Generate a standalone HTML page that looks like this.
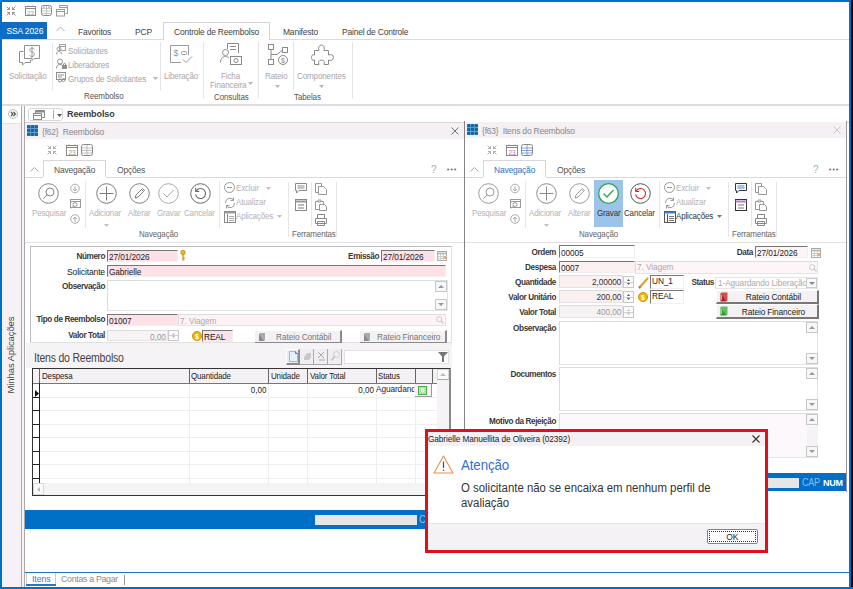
<!DOCTYPE html>
<html><head><meta charset="utf-8">
<style>
*{margin:0;padding:0;box-sizing:border-box}
html,body{width:853px;height:589px;overflow:hidden;background:#fff}
body{position:relative;font-family:"Liberation Sans",sans-serif;font-size:8px;color:#333}
.a{position:absolute}
.t{position:absolute;white-space:nowrap;line-height:12px;font-size:8px}
.g{color:#a8a4a8}
.d{color:#444}
.r{text-align:right}
.c{text-align:center}
.vs{position:absolute;width:1px;background:#e6e3e6}
.hl{position:absolute;height:1px;background:#d9d6d9}
svg{position:absolute;overflow:visible}
</style></head><body>
<!-- window frame -->
<div class="a" style="left:0;top:0;width:853px;height:2px;background:#0070c6"></div>
<div class="a" style="left:0;top:0;width:2px;height:589px;background:#0070c6"></div>
<div class="a" style="left:849px;top:0;width:2px;height:589px;background:#0070c6"></div>
<div class="a" style="left:851px;top:0;width:2px;height:589px;background:#000"></div>
<div class="a" style="left:0;top:587px;width:853px;height:2px;background:#0070c6"></div>

<!-- quick access -->
<svg style="left:6px;top:6px" width="10" height="10" stroke="#999" stroke-width="1" fill="none"><path d="M0.5 0.5L3.5 3.5M3.5 1V3.5H1M9.5 0.5L6.5 3.5M6.5 1V3.5H9M0.5 9.5L3.5 6.5M1 6.5H3.5V9M9.5 9.5L6.5 6.5M9 6.5H6.5V9"/></svg>
<svg style="left:25px;top:5px" width="11" height="11" stroke="#8a8a8a" stroke-width="1" fill="none"><rect x="0.5" y="1.5" width="10" height="9"/><path d="M0.5 3.5H10.5M3 0.5V2M8 0.5V2"/><text x="5.5" y="9.6" font-size="6" fill="#9a9a9a" stroke="none" text-anchor="middle" font-family="Liberation Sans">23</text></svg>
<svg style="left:41px;top:5px" width="11" height="11" fill="none"><rect x="0.5" y="0.5" width="10" height="10" rx="2" stroke="#8a8a8a"/><path d="M5.5 1V10M1 3.5H10M1 6H10M1 8.5H10" stroke="#b8b8b8" stroke-width="0.8"/><path d="M2 2.2H4M7 2.2H9" stroke="#888" stroke-width="0.8"/></svg>
<svg style="left:56px;top:5px" width="12" height="12" stroke="#999" stroke-width="1" fill="none"><rect x="0.5" y="4.5" width="8" height="6.5"/><path d="M0.5 6.5H8.5"/><path d="M3.5 2.5V0.5H11.5V8.5H9.5M3.5 2.5H11.5" /></svg>
<svg style="left:56px;top:26px" width="9" height="6" stroke="#b0b0b0" stroke-width="1" fill="none"><path d="M0.5 5L4.5 1L8.5 5"/></svg>
<!-- ribbon tabs -->
<div class="a" style="left:2px;top:22px;width:45px;height:17px;background:#0f6cc4"></div>
<div class="t" style="left:-1.37px;top:25px;width:51.75px;color:#fff;font-size:9.77px;letter-spacing:-0.115px;text-align:center;transform:scaleX(0.8696);transform-origin:50% 50%">SSA 2026</div>
<div class="hl" style="left:2px;top:39px;width:847px;background:#dcdadc"></div>
<div class="a" style="left:163px;top:22px;width:107px;height:18px;border:1px solid #d6d4d6;border-bottom:none;background:#fff"></div>
<div class="t d" style="left:174px;top:26px;font-size:9.77px;letter-spacing:-0.230px;transform:scaleX(0.8696);transform-origin:0 50%">Controle de Reembolso</div>
<div class="t d" style="left:78px;top:26px;font-size:9.77px;letter-spacing:-0.230px;transform:scaleX(0.8696);transform-origin:0 50%">Favoritos</div>
<div class="t d" style="left:135px;top:26px;font-size:9.77px;letter-spacing:-0.230px;transform:scaleX(0.8696);transform-origin:0 50%">PCP</div>
<div class="t d" style="left:283px;top:26px;font-size:9.77px;letter-spacing:-0.230px;transform:scaleX(0.8696);transform-origin:0 50%">Manifesto</div>
<div class="t d" style="left:342px;top:26px;font-size:9.77px;letter-spacing:-0.230px;transform:scaleX(0.8696);transform-origin:0 50%">Painel de Controle</div>

<!-- ribbon body -->
<!-- ribbon body content -->
<svg style="left:19px;top:45px" width="21" height="21" stroke="#8f8f8f" stroke-width="1" fill="none"><path d="M0.5 6.5H4.5M0.5 6.5V17.5H3.5V20L6 17.5H11.5V15"/><path d="M5.5 0.5H20.5V13.5H15L13 15.5V13.5H5.5Z"/><path d="M15.3 4.3C14.9 3.5 14 3 13 3C11.7 3 10.8 3.8 10.8 4.9C10.8 6.2 12 6.7 13 7C14.3 7.4 15.3 8 15.3 9.4C15.3 10.7 14.3 11.5 13 11.5C11.9 11.5 11 11 10.6 10.2M13 1.8V12.8" stroke-width="0.9"/></svg>
<div class="t g" style="left:9px;top:70px;letter-spacing:-0.115px;font-size:9.20px;transform:scaleX(0.8696);transform-origin:0 50%">Solicitação</div>
<div class="vs" style="left:52px;top:43px;height:47px"></div>
<svg style="left:56px;top:44px" width="10" height="11" stroke="#a0a0a0" stroke-width="1" fill="none"><rect x="3.5" y="0.5" width="6" height="6"/><path d="M3.5 2.5H9.5"/><circle cx="3" cy="5" r="2"/><path d="M0.5 10.5C0.5 8 2 7.5 3 7.5C4 7.5 5.5 8 5.5 10.5"/></svg>
<div class="t g" style="left:68px;top:45px;letter-spacing:-0.115px;font-size:9.20px;transform:scaleX(0.8696);transform-origin:0 50%">Solicitantes</div>
<svg style="left:56px;top:58px" width="11" height="11" stroke="#8f8f8f" stroke-width="1" fill="none"><circle cx="4" cy="3.5" r="2.5"/><path d="M0.5 10.5C0.5 7.5 2 6.5 4 6.5C5 6.5 6 7 6.5 7.5"/><rect x="6.5" y="7.5" width="4" height="3" fill="#8f8f8f"/><path d="M7.5 7.5V6C7.5 5 9.5 5 9.5 6V7.5"/></svg>
<div class="t g" style="left:68px;top:59px;letter-spacing:-0.115px;font-size:9.20px;transform:scaleX(0.8696);transform-origin:0 50%">Liberadores</div>
<svg style="left:56px;top:72px" width="11" height="11" stroke="#8f8f8f" stroke-width="1" fill="none"><rect x="0.5" y="0.5" width="9" height="7"/><path d="M2 3H8M2 5H6"/><circle cx="7.5" cy="8" r="1.5"/><circle cx="4" cy="8.5" r="1.5"/></svg>
<div class="t g" style="left:68px;top:73px;letter-spacing:-0.115px;font-size:9.20px;transform:scaleX(0.8696);transform-origin:0 50%">Grupos de Solicitantes</div>
<svg style="left:153px;top:77px" width="5" height="3" fill="#b5b5b5"><path d="M0 0H5L2.5 3Z"/></svg>
<div class="t d" style="left:84px;top:90px;letter-spacing:-0.115px;color:#555;font-size:9.20px;transform:scaleX(0.8696);transform-origin:0 50%">Reembolso</div>
<div class="vs" style="left:160px;top:42px;height:48px"></div>
<svg style="left:170px;top:45px" width="23" height="21" stroke="#9a9a9a" stroke-width="1" fill="none"><path d="M0.5 0.5H18.5V10M0.5 0.5V17.5H11"/><path d="M13 14.5L16 17.5L22 11.5"/><text x="6" y="11" font-size="9" fill="#9a9a9a" stroke="none" text-anchor="middle" font-family="Liberation Sans">$</text><rect x="11.5" y="6.5" width="5" height="3" rx="1"/></svg>
<div class="t g" style="left:164px;top:70px;letter-spacing:-0.115px;font-size:9.20px;transform:scaleX(0.8696);transform-origin:0 50%">Liberação</div>
<div class="vs" style="left:203px;top:42px;height:56px"></div>
<svg style="left:220px;top:43px" width="23" height="23" stroke="#8a8a8a" stroke-width="1" fill="none"><path d="M7.5 0.5H18.5V10M7.5 0.5V6"/><path d="M10 3.5H16M10 6.5H16"/><circle cx="5.5" cy="9.5" r="3"/><path d="M0.5 19.5C0.5 15 3 13.5 5.5 13.5C7 13.5 8 14 9 15"/><rect x="10.5" y="13.5" width="11" height="8"/><circle cx="16" cy="17.5" r="2"/></svg>
<div class="t g" style="left:221px;top:70px;letter-spacing:-0.115px;font-size:9.20px;transform:scaleX(0.8696);transform-origin:0 50%">Ficha</div>
<div class="t g" style="left:210px;top:79px;letter-spacing:-0.115px;font-size:9.20px;transform:scaleX(0.8696);transform-origin:0 50%">Financeira</div>
<svg style="left:248px;top:82px" width="5" height="3" fill="#b5b5b5"><path d="M0 0H5L2.5 3Z"/></svg>
<div class="t d" style="left:214px;top:91px;letter-spacing:-0.115px;color:#555;font-size:9.20px;transform:scaleX(0.8696);transform-origin:0 50%">Consultas</div>
<div class="vs" style="left:258px;top:42px;height:56px"></div>
<svg style="left:268px;top:44px" width="21" height="22" stroke="#8a8a8a" stroke-width="1" fill="none"><rect x="0.5" y="0.5" width="5" height="5"/><rect x="14.5" y="3.5" width="5" height="5"/><rect x="0.5" y="15.5" width="5" height="5"/><path d="M3 5.5V15.5M3 10.5H9L14.5 6"/><circle cx="15" cy="16" r="4.5"/><text x="15" y="19" font-size="7" fill="#8a8a8a" stroke="none" text-anchor="middle" font-family="Liberation Sans">$</text></svg>
<div class="t g" style="left:265px;top:70px;letter-spacing:-0.115px;font-size:9.20px;transform:scaleX(0.8696);transform-origin:0 50%">Rateio</div>
<svg style="left:275px;top:85px" width="5" height="3" fill="#b5b5b5"><path d="M0 0H5L2.5 3Z"/></svg>
<div class="vs" style="left:293px;top:42px;height:48px"></div>
<svg style="left:311px;top:44px" width="23" height="22" stroke="#8a8a8a" stroke-width="1" fill="none"><path d="M3.5 6.5H8C7 4 8 1 10.5 1C13 1 14 4 13 6.5H17.5V11C20 10 22.5 11 22.5 13.5C22.5 16 20 17 17.5 16V20.5H13C14 18 13 16 10.5 16C8 16 7 18 8 20.5H3.5V16C1 17 0.5 15 0.5 13.5C0.5 12 1 10 3.5 11Z"/></svg>
<div class="t g" style="left:297px;top:70px;letter-spacing:-0.115px;font-size:9.20px;transform:scaleX(0.8696);transform-origin:0 50%">Componentes</div>
<svg style="left:319px;top:85px" width="5" height="3" fill="#b5b5b5"><path d="M0 0H5L2.5 3Z"/></svg>
<div class="t d" style="left:294px;top:91px;letter-spacing:-0.115px;color:#555;font-size:9.20px;transform:scaleX(0.8696);transform-origin:0 50%">Tabelas</div>
<div class="vs" style="left:352px;top:42px;height:56px"></div>

<div class="hl" style="left:2px;top:104px;width:847px;height:2px;background:#dedcde"></div>

<div class="a" style="left:2px;top:106px;width:19px;height:481px;background:#f5f1f4;"></div>
<div class="a" style="left:2px;top:106px;width:19px;height:17px;background:#fff;"></div>
<div class="a" style="left:2px;top:123px;width:19px;height:1px;background:#e4e0e3;"></div>
<div class="a" style="left:21px;top:106px;width:1px;height:481px;background:#a9a7a9;"></div>
<div class="a" style="left:22px;top:106px;width:2px;height:481px;background:#f7f5f7;"></div>
<div class="a" style="left:24px;top:106px;width:1px;height:481px;background:#a9a7a9;"></div>
<svg style="left:8px;top:109px" width="10" height="10" ><circle cx="5" cy="5" r="4.5" fill="#f2f2f2" stroke="#c4c4c4"/><path d="M3 3L5 5L3 7M5.5 3L7.5 5L5.5 7" stroke="#555" fill="none" stroke-width="1.1"/></svg>
<div class="t" style="left:-36px;top:349px;width:93px;text-align:center;transform:rotate(-90deg);font-size:9.6px;color:#4a4a4a;letter-spacing:-0.15px">Minhas Aplicações</div>
<div class="a" style="left:28px;top:108px;width:35px;height:13px;border:1px solid #d8d6d8;border-radius:3px;background:#fff"></div>
<svg style="left:33px;top:110px" width="12" height="10" stroke="#8a8a8a" fill="none" stroke-width="1"><rect x="0.5" y="3.5" width="8" height="6" fill="#fff"/><path d="M0.5 5.5H8.5M2.5 3.5V0.5H11.5V7.5H8.5M2.5 2H11.5" /><path d="M2.5 1.5H11.5"/></svg>
<div class="a" style="left:53px;top:110px;width:1px;height:9px;background:#aaa;"></div>
<svg style="left:57px;top:114px" width="5" height="3" ><path d="M0 0H5L2.5 3Z" fill="#555"/></svg>
<div class="t " style="left:67px;top:108px;font-size:9px;font-weight:bold;color:#3a3a3a;letter-spacing:-0.1px">Reembolso</div>
<div class="a" style="left:25px;top:122px;width:824px;height:1px;background:#d6d4d6;"></div>
<div class="a" style="left:30px;top:246px;width:422px;height:97px;border:1px solid #bdbdbd;border-right-color:#e0e0e0;border-bottom-color:#e0e0e0"></div>
<div class="t" style="left:-15px;top:251px;width:120px;text-align:right;font-weight:bold;font-size:8.2px;letter-spacing:-0.4px;color:#383838;">Número</div>
<div class="a" style="left:107px;top:250px;width:71px;height:12px;background:#fde1e7;border-top:1px solid #777;border-left:1px solid #777;border-right:1px solid #f4eef0;border-bottom:1px solid #f4eef0"></div>
<div class="t " style="left:109px;top:251px;color:#222;font-size:9.54px;letter-spacing:-0.115px;line-height:12px;transform:scaleX(0.8696);transform-origin:0 50%">27/01/2026</div>
<svg style="left:180px;top:250px" width="6" height="11" ><circle cx="3" cy="2.5" r="2.3" fill="#e8b820" stroke="#b08000" stroke-width="0.6"/><path d="M3 4.5V10.5M3 8H5M3 10H4.5" stroke="#c89000" stroke-width="1.2"/></svg>
<div class="t" style="left:259px;top:251px;width:120px;text-align:right;font-weight:bold;font-size:8.2px;letter-spacing:-0.4px;color:#383838;">Emissão</div>
<div class="a" style="left:381px;top:250px;width:54px;height:12px;background:#fde1e7;border-top:1px solid #777;border-left:1px solid #777;border-right:1px solid #f4eef0;border-bottom:1px solid #f4eef0"></div>
<div class="t " style="left:383px;top:251px;color:#222;font-size:9.54px;letter-spacing:-0.115px;line-height:12px;transform:scaleX(0.8696);transform-origin:0 50%">27/01/2026</div>
<svg style="left:437px;top:251px" width="10" height="10" ><rect x="0.5" y="0.5" width="9" height="9" fill="#fff" stroke="#aaa"/><path d="M0.5 2.5H9.5" stroke="#bbb" stroke-width="2"/><path d="M3.5 3V9.5M6.5 3V9.5M0.5 5.5H9.5M0.5 7.5H9.5" stroke="#ccc"/><rect x="6.5" y="5.5" width="3" height="2" fill="#f0a050"/></svg>
<div class="t" style="left:-33.00px;top:266px;width:138.00px;text-align:right;font-weight:normal;font-size:9.89px;letter-spacing:-0.172px;color:#222;transform:scaleX(0.8696);transform-origin:100% 50%">Solicitante</div>
<div class="a" style="left:107px;top:265px;width:339px;height:12px;background:#fde1e7;border-top:1px solid #777;border-left:1px solid #777;border-right:1px solid #f4eef0;border-bottom:1px solid #f4eef0"></div>
<div class="t " style="left:109px;top:266px;color:#222;font-size:9.54px;letter-spacing:-0.115px;line-height:12px;transform:scaleX(0.8696);transform-origin:0 50%">Gabrielle</div>
<div class="t" style="left:-15px;top:281px;width:120px;text-align:right;font-weight:bold;font-size:8.2px;letter-spacing:-0.4px;color:#383838;">Observação</div>
<div class="a" style="left:107px;top:280px;width:341px;height:31px;background:#fff;border-top:1px solid #dcdcdc;border-left:1px solid #dcdcdc;border-right:1px solid #e4e4e4;border-bottom:1px solid #e4e4e4"></div>
<div class="a" style="left:435px;top:281px;width:12px;height:11px;border:1px solid #c8c8c8;background:#f7f7f7"></div>
<svg style="left:438px;top:285px" width="6" height="3" ><path d="M0 3H6L3 0Z" fill="#999"/></svg>
<div class="a" style="left:435px;top:299px;width:12px;height:11px;border:1px solid #c8c8c8;background:#f7f7f7"></div>
<svg style="left:438px;top:303px" width="6" height="3" ><path d="M0 0H6L3 3Z" fill="#999"/></svg>
<div class="t" style="left:-15px;top:314px;width:120px;text-align:right;font-weight:bold;font-size:8.2px;letter-spacing:-0.4px;color:#383838;">Tipo de Reembolso</div>
<div class="a" style="left:107px;top:314px;width:71px;height:12px;background:#fde1e7;border-top:1px solid #777;border-left:1px solid #777;border-right:1px solid #f4eef0;border-bottom:1px solid #f4eef0"></div>
<div class="t " style="left:109px;top:315px;color:#222;font-size:9.54px;letter-spacing:-0.115px;line-height:12px;transform:scaleX(0.8696);transform-origin:0 50%">01007</div>
<div class="a" style="left:178px;top:314px;width:268px;height:12px;background:#fdf3f6;border-top:1px solid #dcdcdc;border-left:1px solid #dcdcdc;border-right:1px solid #e4e4e4;border-bottom:1px solid #e4e4e4"></div>
<div class="t " style="left:180px;top:315px;color:#aaa;font-size:9.54px;letter-spacing:-0.115px;line-height:12px;transform:scaleX(0.8696);transform-origin:0 50%">7. Viagem</div>
<svg style="left:436px;top:316px" width="8" height="8" ><circle cx="3.2" cy="3.2" r="2.6" fill="none" stroke="#ccc"/><path d="M5 5L7.5 7.5" stroke="#ccc" stroke-width="1.2"/></svg>
<div class="t" style="left:-15px;top:330px;width:120px;text-align:right;font-weight:bold;font-size:8.2px;letter-spacing:-0.4px;color:#383838;">Valor Total</div>
<div class="a" style="left:107px;top:330px;width:61px;height:11px;background:#f8f4f6;border-top:1px solid #dcdcdc;border-left:1px solid #dcdcdc;border-right:1px solid #e4e4e4;border-bottom:1px solid #e4e4e4"></div>
<div class="t" style="left:98.15px;top:331px;width:67.85px;text-align:right;color:#999;font-size:9.54px;letter-spacing:-0.115px;line-height:11px;transform:scaleX(0.8696);transform-origin:100% 50%">0,00</div>
<div class="a" style="left:168px;top:330px;width:11px;height:11px;border:1px solid #c8c8c8;background:#fafafa"></div>
<div class="a" style="left:169px;top:335px;width:9px;height:1px;background:#d0d0d0;"></div>
<svg style="left:172px;top:333px" width="3" height="2" ><path d="M0 2H3L1.5 0Z" fill="#bbb"/></svg>
<svg style="left:172px;top:336px" width="3" height="2" ><path d="M0 0H3L1.5 2Z" fill="#bbb"/></svg>
<svg style="left:192px;top:331px" width="10" height="10" ><circle cx="5" cy="5" r="4.6" fill="#f0b400" stroke="#c88a00" stroke-width="0.8"/><text x="5" y="7.8" font-size="7" font-weight="bold" fill="#fff" text-anchor="middle" font-family="Liberation Sans">$</text></svg>
<div class="a" style="left:202px;top:330px;width:31px;height:12px;background:#fde1e7;border-top:1px solid #777;border-left:1px solid #777;border-right:1px solid #f4eef0;border-bottom:1px solid #f4eef0"></div>
<div class="t " style="left:204px;top:331px;color:#222;font-size:9.54px;letter-spacing:-0.115px;line-height:12px;transform:scaleX(0.8696);transform-origin:0 50%">REAL</div>
<div class="a" style="left:254px;top:330px;width:88px;height:14px;background:#f3f1f3;border-top:1px solid #fff;border-left:1px solid #fff;border-right:2px solid #8a8a8a;border-bottom:2px solid #8a8a8a"></div>
<svg style="left:258px;top:333px" width="7" height="9" ><path d="M1 1H6V8H1Z" fill="#8a8a8a"/><path d="M1 1L2 0H7V7L6 8" fill="#aaa"/></svg>
<div class="t" style="left:260.30px;top:331px;width:87.40px;text-align:center;color:#777;font-size:9.54px;letter-spacing:-0.115px;transform:scaleX(0.8696);transform-origin:50% 50%">Rateio Contábil</div>
<div class="a" style="left:359px;top:330px;width:88px;height:14px;background:#f3f1f3;border-top:1px solid #fff;border-left:1px solid #fff;border-right:2px solid #8a8a8a;border-bottom:2px solid #8a8a8a"></div>
<svg style="left:363px;top:333px" width="7" height="9" ><path d="M1 1H6V8H1Z" fill="#8a8a8a"/><path d="M1 1L2 0H7V7L6 8" fill="#aaa"/></svg>
<div class="t" style="left:365.30px;top:331px;width:87.40px;text-align:center;color:#777;font-size:9.54px;letter-spacing:-0.115px;transform:scaleX(0.8696);transform-origin:50% 50%">Rateio Financeiro</div>
<div class="a" style="left:26px;top:343px;width:426px;height:25px;background:#f6f3f6;"></div>
<div class="t " style="left:34px;top:352px;font-size:12.07px;color:#444;letter-spacing:-0.230px;transform:scaleX(0.8696);transform-origin:0 50%">Itens do Reembolso</div>
<div class="a" style="left:286px;top:349px;width:14px;height:16px;background:#eceaec;border-top:1px solid #fff;border-left:1px solid #fff;border-right:2px solid #8c8c8c;border-bottom:2px solid #8c8c8c"></div>
<svg style="left:289px;top:351px" width="9" height="11" ><path d="M0.5 0.5H6.5L8.5 2.5V10.5H0.5Z" fill="#e2f2fd" stroke="#a8b0f0"/><path d="M6.5 0.5V2.5H8.5" fill="none" stroke="#7070c0"/></svg>
<div class="a" style="left:300px;top:349px;width:14px;height:16px;background:#f0eef0;border-right:1px solid #aaa;border-bottom:1px solid #aaa"></div>
<div class="a" style="left:314px;top:349px;width:14px;height:16px;background:#f0eef0;border-right:1px solid #aaa;border-bottom:1px solid #aaa"></div>
<div class="a" style="left:328px;top:349px;width:14px;height:16px;background:#f0eef0;border-right:1px solid #aaa;border-bottom:1px solid #aaa"></div>
<svg style="left:303px;top:352px" width="9" height="9" ><path d="M1 5L4 1H8V5L6 8H1Z" fill="#c8c8c8"/></svg>
<svg style="left:317px;top:351px" width="9" height="11" ><path d="M1 1L7 7M7 1L1 7" stroke="#aaa"/><path d="M2 8H8V10H2Z" fill="#ccc"/></svg>
<svg style="left:331px;top:351px" width="9" height="11" ><circle cx="5.5" cy="3.5" r="3" fill="none" stroke="#ccc"/><path d="M3.5 5.5L0.5 9.5" stroke="#bbb" stroke-width="1.3"/></svg>
<div class="a" style="left:344px;top:350px;width:105px;height:14px;background:#fff;border:1px solid #e2e0e2"></div>
<svg style="left:438px;top:352px" width="11" height="11" ><path d="M0 0H10L6 4.5V10H4V4.5Z" fill="#777"/></svg>
<div class="a" style="left:32px;top:368px;width:419px;height:128px;background:#fff;border:1px solid #333;border-right:2px solid #8a8a8a"></div>
<div class="a" style="left:33px;top:369px;width:404px;height:14px;background:#f4f1f4;"></div>
<div class="a" style="left:33px;top:383px;width:404px;height:1px;background:#777;"></div>
<div class="a" style="left:38.6px;top:369px;width:1px;height:14px;background:#666;"></div>
<div class="a" style="left:188.7px;top:369px;width:1px;height:14px;background:#666;"></div>
<div class="a" style="left:268.3px;top:369px;width:1px;height:14px;background:#666;"></div>
<div class="a" style="left:307.3px;top:369px;width:1px;height:14px;background:#666;"></div>
<div class="a" style="left:375.5px;top:369px;width:1px;height:14px;background:#666;"></div>
<div class="a" style="left:414.5px;top:369px;width:1px;height:14px;background:#666;"></div>
<div class="a" style="left:431.5px;top:369px;width:1px;height:14px;background:#666;"></div>
<div class="a" style="left:188.7px;top:384px;width:1px;height:99px;background:#f1eef1;"></div>
<div class="a" style="left:268.3px;top:384px;width:1px;height:99px;background:#f1eef1;"></div>
<div class="a" style="left:307.3px;top:384px;width:1px;height:99px;background:#f1eef1;"></div>
<div class="a" style="left:375.5px;top:384px;width:1px;height:99px;background:#f1eef1;"></div>
<div class="a" style="left:414.5px;top:384px;width:1px;height:99px;background:#f1eef1;"></div>
<div class="a" style="left:39px;top:396.5px;width:398px;height:1px;background:#f1eef1;"></div>
<div class="a" style="left:33px;top:396.5px;width:6px;height:1px;background:#222;"></div>
<div class="a" style="left:39px;top:410.0px;width:398px;height:1px;background:#f1eef1;"></div>
<div class="a" style="left:33px;top:410.0px;width:6px;height:1px;background:#222;"></div>
<div class="a" style="left:39px;top:423.5px;width:398px;height:1px;background:#f1eef1;"></div>
<div class="a" style="left:33px;top:423.5px;width:6px;height:1px;background:#222;"></div>
<div class="a" style="left:39px;top:437.0px;width:398px;height:1px;background:#f1eef1;"></div>
<div class="a" style="left:33px;top:437.0px;width:6px;height:1px;background:#222;"></div>
<div class="a" style="left:39px;top:450.5px;width:398px;height:1px;background:#f1eef1;"></div>
<div class="a" style="left:33px;top:450.5px;width:6px;height:1px;background:#222;"></div>
<div class="a" style="left:39px;top:464.0px;width:398px;height:1px;background:#f1eef1;"></div>
<div class="a" style="left:33px;top:464.0px;width:6px;height:1px;background:#222;"></div>
<div class="a" style="left:39px;top:477.5px;width:398px;height:1px;background:#f1eef1;"></div>
<div class="a" style="left:33px;top:477.5px;width:6px;height:1px;background:#222;"></div>
<div class="a" style="left:38.6px;top:383px;width:1px;height:100px;background:#222;"></div>
<svg style="left:35px;top:390px" width="4" height="7" ><path d="M0 0L4 3.5L0 7Z" fill="#111"/></svg>
<div class="t " style="left:42px;top:370px;font-size:9.20px;color:#222;letter-spacing:-0.172px;transform:scaleX(0.8696);transform-origin:0 50%">Despesa</div>
<div class="t " style="left:191px;top:370px;font-size:9.20px;color:#222;letter-spacing:-0.172px;transform:scaleX(0.8696);transform-origin:0 50%">Quantidade</div>
<div class="t " style="left:271px;top:370px;font-size:9.20px;color:#222;letter-spacing:-0.172px;transform:scaleX(0.8696);transform-origin:0 50%">Unidade</div>
<div class="t " style="left:310px;top:370px;font-size:9.20px;color:#222;letter-spacing:-0.172px;transform:scaleX(0.8696);transform-origin:0 50%">Valor Total</div>
<div class="t " style="left:378px;top:370px;font-size:9.20px;color:#222;letter-spacing:-0.172px;transform:scaleX(0.8696);transform-origin:0 50%">Status</div>
<div class="t" style="left:178.60px;top:384px;width:87.40px;text-align:right;font-size:9.20px;color:#222;transform:scaleX(0.8696);transform-origin:100% 50%">0,00</div>
<div class="t" style="left:298.10px;top:384px;width:75.90px;text-align:right;font-size:9.20px;color:#222;transform:scaleX(0.8696);transform-origin:100% 50%">0,00</div>
<div class="t" style="left:376.00px;top:383px;width:43.70px;overflow:hidden;font-size:9.54px;color:#1a1a4a;letter-spacing:-0.115px;transform:scaleX(0.8696);transform-origin:0 50%">Aguardando</div>
<div class="a" style="left:415px;top:384px;width:17px;height:13px;background:#f4f2f4;border-right:1px solid #999;border-bottom:1px solid #999"></div>
<svg style="left:418px;top:386px" width="9" height="9" ><rect x="0.5" y="0.5" width="8" height="8" fill="#b8e0b0" stroke="#4caa4c"/><path d="M3 3H6M3 5H6" stroke="#fff"/></svg>
<div class="a" style="left:437px;top:369px;width:12px;height:114px;background:#f5f3f5;"></div>
<div class="a" style="left:437px;top:369px;width:12px;height:11px;background:#fafafa;border:1px solid #d8d8d8;border-bottom-color:#aaa"></div>
<svg style="left:440px;top:373px" width="6" height="3" ><path d="M0 3H6L3 0Z" fill="#bbb"/></svg>
<div class="a" style="left:33px;top:483px;width:416px;height:12px;background:#f4f4f4;"></div>
<div class="a" style="left:33px;top:483px;width:11px;height:12px;background:#fafafa;border:1px solid #d8d8d8"></div>
<svg style="left:37px;top:487px" width="3" height="5" ><path d="M3 0V5L0 2.5Z" fill="#bbb"/></svg>
<div class="a" style="left:25px;top:123px;width:439px;height:16px;background:#f4f0f4;"></div>
<svg style="left:27px;top:125px" width="11" height="11" ><path d="M1 10L10 1M4.5 10.5L10.5 4.5M0.5 6.5L6.5 0.5" stroke="#7ab0dc" stroke-width="0.8"/><rect x="0" y="0" width="3.6" height="3.6" rx="0.7" fill="#0e6aae"/><rect x="0" y="3.7" width="3.6" height="3.6" rx="0.7" fill="#0e6aae"/><rect x="0" y="7.4" width="3.6" height="3.6" rx="0.7" fill="#0e6aae"/><rect x="3.7" y="0" width="3.6" height="3.6" rx="0.7" fill="#0e6aae"/><rect x="3.7" y="3.7" width="3.6" height="3.6" rx="0.7" fill="#0e6aae"/><rect x="3.7" y="7.4" width="3.6" height="3.6" rx="0.7" fill="#0e6aae"/><rect x="7.4" y="0" width="3.6" height="3.6" rx="0.7" fill="#0e6aae"/><rect x="7.4" y="3.7" width="3.6" height="3.6" rx="0.7" fill="#0e6aae"/><rect x="7.4" y="7.4" width="3.6" height="3.6" rx="0.7" fill="#0e6aae"/></svg>
<div class="t " style="left:42px;top:126px;color:#8a878a;font-size:9.77px;letter-spacing:-0.230px;transform:scaleX(0.8696);transform-origin:0 50%">{f62}&nbsp; Reembolso</div>
<svg style="left:451px;top:127px" width="8" height="8" ><path d="M0.5 0.5L7.5 7.5M7.5 0.5L0.5 7.5" stroke="#707070" stroke-width="1"/></svg>
<svg style="left:47px;top:145px" width="10" height="10" ><path d="M0.5 0.5L3.5 3.5M3.5 1V3.5H1M9.5 0.5L6.5 3.5M6.5 1V3.5H9M0.5 9.5L3.5 6.5M1 6.5H3.5V9M9.5 9.5L6.5 6.5M9 6.5H6.5V9" stroke="#a8a8a8" fill="none" stroke-width="0.9"/></svg>
<svg style="left:66px;top:144px" width="12" height="12" ><rect x="0.5" y="1.5" width="11" height="10" fill="none" stroke="#888"/><path d="M0.5 3.5H11.5M3 0.5V2M9 0.5V2" stroke="#888"/><text x="6" y="10.5" font-size="6.5" fill="#999" text-anchor="middle" font-family="Liberation Sans">23</text></svg>
<svg style="left:81px;top:144px" width="12" height="12" ><rect x="0.5" y="0.5" width="11" height="11" rx="2" fill="none" stroke="#888"/><path d="M6 1V11M1 4H11M1 6.5H11M1 9H11" stroke="#b0b0b0" stroke-width="0.8"/></svg>
<svg style="left:30px;top:167px" width="9" height="5" ><path d="M0.5 4.5L4.5 0.5L8.5 4.5" stroke="#aaa" fill="none"/></svg>
<div class="a" style="left:43px;top:160px;width:63px;height:18px;border:1px solid #d8d6d8;border-bottom:none;background:#fff"></div>
<div class="a" style="left:25px;top:177px;width:439px;height:1px;background:#dad8da;"></div>
<div class="a" style="left:43px;top:177px;width:63px;height:1px;background:#fff;"></div>
<div class="t " style="left:54px;top:164px;font-size:9.77px;letter-spacing:-0.230px;color:#555;transform:scaleX(0.8696);transform-origin:0 50%">Navegação</div>
<div class="t " style="left:117px;top:164px;font-size:9.77px;letter-spacing:-0.230px;color:#555;transform:scaleX(0.8696);transform-origin:0 50%">Opções</div>
<div class="t " style="left:431px;top:163px;font-size:11.50px;color:#aaa;transform:scaleX(0.8696);transform-origin:0 50%">?</div>
<svg style="left:447px;top:168px" width="10" height="3" ><circle cx="1.2" cy="1.5" r="1.1" fill="#777"/><circle cx="4.7" cy="1.5" r="1.1" fill="#777"/><circle cx="8.2" cy="1.5" r="1.1" fill="#777"/></svg>
<svg style="left:38px;top:183px" width="22" height="22" ><circle cx="10.5" cy="10.5" r="9.8" fill="none" stroke="#858585"/><circle cx="12" cy="9" r="4" fill="none" stroke="#858585"/><path d="M9.2 11.8L5.5 15.5" stroke="#858585"/></svg>
<div class="t " style="left:32px;top:207px;color:#b5b1b5;letter-spacing:-0.172px;font-size:9.20px;transform:scaleX(0.8696);transform-origin:0 50%">Pesquisar</div>
<svg style="left:70px;top:184px" width="10" height="10" ><circle cx="5" cy="4.5" r="4.3" fill="none" stroke="#aaa"/><path d="M5 2V7M3 5L5 7L7 5" stroke="#aaa" fill="none"/></svg>
<svg style="left:70px;top:199px" width="11" height="10" ><rect x="0.5" y="0.5" width="10" height="8" fill="none" stroke="#999"/><path d="M0.5 2.5H10.5" stroke="#999"/><circle cx="5" cy="5.5" r="2" fill="none" stroke="#999"/><path d="M3.5 7L1 9.5" stroke="#999"/></svg>
<svg style="left:70px;top:214px" width="10" height="10" ><circle cx="5" cy="5" r="4.3" fill="none" stroke="#aaa"/><path d="M5 8V3M3 5L5 3L7 5" stroke="#aaa" fill="none"/></svg>
<div class="a" style="left:85px;top:181px;width:1px;height:47px;background:#e8e5e8;"></div>
<svg style="left:96px;top:183px" width="22" height="22" ><circle cx="10.5" cy="10.5" r="9.8" fill="none" stroke="#7a7a7a"/><path d="M10.5 3.5V17.5M3.5 10.5H17.5" stroke="#7a7a7a"/></svg>
<div class="t " style="left:89px;top:207px;color:#b5b1b5;letter-spacing:-0.172px;font-size:9.20px;transform:scaleX(0.8696);transform-origin:0 50%">Adicionar</div>
<svg style="left:104px;top:224px" width="5" height="3" ><path d="M0 0H5L2.5 3Z" fill="#c0c0c0"/></svg>
<svg style="left:129px;top:183px" width="22" height="22" ><circle cx="10.5" cy="10.5" r="9.8" fill="none" stroke="#808080"/><path d="M6 15L7 12L13.5 5.5L15.5 7.5L9 14Z M12.5 6.5L14.5 8.5" stroke="#808080" fill="none"/></svg>
<div class="t " style="left:128px;top:207px;color:#b5b1b5;letter-spacing:-0.172px;font-size:9.20px;transform:scaleX(0.8696);transform-origin:0 50%">Alterar</div>
<svg style="left:158px;top:183px" width="22" height="22" ><circle cx="10.5" cy="10.5" r="9.8" fill="none" stroke="#aaa" stroke-width="1"/><path d="M5.5 10.5L9 14L15.5 7" stroke="#aaa" fill="none" stroke-width="1"/></svg>
<div class="t " style="left:157px;top:207px;color:#b5b1b5;letter-spacing:-0.172px;font-size:9.20px;transform:scaleX(0.8696);transform-origin:0 50%">Gravar</div>
<svg style="left:190px;top:183px" width="22" height="22" ><circle cx="10.5" cy="10.5" r="9.8" fill="none" stroke="#6a6a6a"/><path d="M6.2 8A5 5 0 1 1 5.6 11.4" stroke="#6a6a6a" fill="none" stroke-width="1.1"/><path d="M5.7 4.8V8.4H9.2" stroke="#6a6a6a" fill="none" stroke-width="1.1"/></svg>
<div class="t " style="left:184px;top:207px;color:#b5b1b5;letter-spacing:-0.172px;font-size:9.20px;transform:scaleX(0.8696);transform-origin:0 50%">Cancelar</div>
<div class="a" style="left:219px;top:181px;width:1px;height:47px;background:#e8e5e8;"></div>
<svg style="left:224px;top:182px" width="12" height="12" ><circle cx="5.5" cy="5.5" r="5" fill="none" stroke="#999"/><path d="M3 5.5H8" stroke="#999"/></svg>
<div class="t " style="left:236px;top:182px;color:#b5b1b5;letter-spacing:-0.172px;font-size:9.20px;transform:scaleX(0.8696);transform-origin:0 50%">Excluir</div>
<svg style="left:266px;top:187px" width="5" height="3" ><path d="M0 0H5L2.5 3Z" fill="#c0c0c0"/></svg>
<svg style="left:224px;top:197px" width="12" height="12" ><path d="M1.5 6A4.5 4.5 0 0 1 9.5 3M10.5 6A4.5 4.5 0 0 1 2.5 9" fill="none" stroke="#999"/><path d="M9.5 0.5V3.5H6.5M2.5 11.5V8.5H5.5" fill="none" stroke="#999"/></svg>
<div class="t " style="left:236px;top:196px;color:#b5b1b5;letter-spacing:-0.172px;font-size:9.20px;transform:scaleX(0.8696);transform-origin:0 50%">Atualizar</div>
<svg style="left:224px;top:211px" width="12" height="12" ><rect x="0.5" y="0.5" width="11" height="11" fill="none" stroke="#8a8a8a"/><path d="M0.5 1.5H11.5" stroke="#9a9a9a" stroke-width="2"/><path d="M3.5 3V11.5" stroke="#8a8a8a"/><path d="M5 5.5H10M5 7.5H10M5 9.5H10" stroke="#aaa"/></svg>
<div class="t " style="left:236px;top:210px;color:#b5b1b5;letter-spacing:-0.172px;font-size:9.20px;transform:scaleX(0.8696);transform-origin:0 50%">Aplicações</div>
<svg style="left:277px;top:215px" width="5" height="3" ><path d="M0 0H5L2.5 3Z" fill="#c0c0c0"/></svg>
<div class="t " style="left:139px;top:228px;color:#666;letter-spacing:-0.172px;font-size:9.20px;transform:scaleX(0.8696);transform-origin:0 50%">Navegação</div>
<div class="a" style="left:288px;top:182px;width:1px;height:55px;background:#e8e5e8;"></div>
<svg style="left:295px;top:183px" width="12" height="11" ><path d="M0.5 0.5H11.5V7.5H4L1.5 10V7.5H0.5Z" fill="none" stroke="#888"/><path d="M2.5 3H9.5M2.5 5H9.5" stroke="#888"/></svg>
<svg style="left:295px;top:199px" width="12" height="12" ><rect x="0.5" y="0.5" width="11" height="11" fill="none" stroke="#888"/><path d="M0.5 2.5H11.5" stroke="#999" stroke-width="2"/><path d="M3 6H9M3 9H9" stroke="#777"/></svg>
<div class="a" style="left:311px;top:182px;width:1px;height:45px;background:#e8e5e8;"></div>
<svg style="left:315px;top:183px" width="12" height="12" ><path d="M0.5 0.5H6.5V9.5H0.5Z" fill="#fff" stroke="#999"/><path d="M3.5 3.5H8.5L11.5 6.5V11.5H3.5Z" fill="#fff" stroke="#999"/></svg>
<svg style="left:315px;top:199px" width="12" height="12" ><path d="M0.5 2.5H8.5V10.5H0.5Z" fill="none" stroke="#999"/><path d="M3 1H6V3H3Z" fill="#fff" stroke="#999"/><path d="M4.5 5.5H9.5L11.5 7.5V11.5H4.5Z" fill="#fff" stroke="#999"/></svg>
<svg style="left:315px;top:214px" width="12" height="12" ><path d="M2.5 4.5V0.5H9.5V4.5M0.5 4.5H11.5V9.5H0.5Z M2.5 7.5H9.5V11.5H2.5Z" fill="#fff" stroke="#888"/></svg>
<div class="a" style="left:336px;top:182px;width:1px;height:55px;background:#e8e5e8;"></div>
<div class="t " style="left:292px;top:228px;color:#666;letter-spacing:-0.172px;font-size:9.20px;transform:scaleX(0.8696);transform-origin:0 50%">Ferramentas</div>
<div class="a" style="left:25px;top:242px;width:439px;height:1px;background:#e2e0e2;"></div>
<div class="a" style="left:465px;top:122px;width:381px;height:16px;background:#f4f0f4;"></div>
<svg style="left:467px;top:124px" width="11" height="11" ><path d="M1 10L10 1M4.5 10.5L10.5 4.5M0.5 6.5L6.5 0.5" stroke="#7ab0dc" stroke-width="0.8"/><rect x="0" y="0" width="3.6" height="3.6" rx="0.7" fill="#0e6aae"/><rect x="0" y="3.7" width="3.6" height="3.6" rx="0.7" fill="#0e6aae"/><rect x="0" y="7.4" width="3.6" height="3.6" rx="0.7" fill="#0e6aae"/><rect x="3.7" y="0" width="3.6" height="3.6" rx="0.7" fill="#0e6aae"/><rect x="3.7" y="3.7" width="3.6" height="3.6" rx="0.7" fill="#0e6aae"/><rect x="3.7" y="7.4" width="3.6" height="3.6" rx="0.7" fill="#0e6aae"/><rect x="7.4" y="0" width="3.6" height="3.6" rx="0.7" fill="#0e6aae"/><rect x="7.4" y="3.7" width="3.6" height="3.6" rx="0.7" fill="#0e6aae"/><rect x="7.4" y="7.4" width="3.6" height="3.6" rx="0.7" fill="#0e6aae"/></svg>
<div class="t " style="left:482px;top:125px;color:#8a878a;font-size:9.77px;letter-spacing:-0.230px;transform:scaleX(0.8696);transform-origin:0 50%">{f63}&nbsp; Itens do Reembolso</div>
<svg style="left:833px;top:126px" width="8" height="8" ><path d="M0.5 0.5L7.5 7.5M7.5 0.5L0.5 7.5" stroke="#c8c8c8" stroke-width="1"/></svg>
<svg style="left:487px;top:145px" width="10" height="10" ><path d="M0.5 0.5L3.5 3.5M3.5 1V3.5H1M9.5 0.5L6.5 3.5M6.5 1V3.5H9M0.5 9.5L3.5 6.5M1 6.5H3.5V9M9.5 9.5L6.5 6.5M9 6.5H6.5V9" stroke="#a8a8a8" fill="none" stroke-width="0.9"/></svg>
<svg style="left:506px;top:144px" width="12" height="12" ><rect x="0.5" y="1.5" width="11" height="10" fill="none" stroke="#888"/><path d="M0.5 3.5H11.5M3 0.5V2M9 0.5V2" stroke="#888"/><text x="6" y="10.5" font-size="6.5" fill="#b07cc6" text-anchor="middle" font-family="Liberation Sans">23</text></svg>
<svg style="left:521px;top:144px" width="12" height="12" ><rect x="0.5" y="0.5" width="11" height="11" rx="2" fill="none" stroke="#888"/><path d="M6 1V11M1 4H11M1 6.5H11M1 9H11" stroke="#6a8fd0" stroke-width="0.8"/></svg>
<svg style="left:470px;top:167px" width="9" height="5" ><path d="M0.5 4.5L4.5 0.5L8.5 4.5" stroke="#aaa" fill="none"/></svg>
<div class="a" style="left:483px;top:160px;width:63px;height:18px;border:1px solid #d8d6d8;border-bottom:none;background:#fff"></div>
<div class="a" style="left:465px;top:177px;width:381px;height:1px;background:#dad8da;"></div>
<div class="a" style="left:483px;top:177px;width:63px;height:1px;background:#fff;"></div>
<div class="t " style="left:494px;top:164px;font-size:9.77px;letter-spacing:-0.230px;color:#2f6fc4;transform:scaleX(0.8696);transform-origin:0 50%">Navegação</div>
<div class="t " style="left:557px;top:164px;font-size:9.77px;letter-spacing:-0.230px;color:#555;transform:scaleX(0.8696);transform-origin:0 50%">Opções</div>
<div class="t " style="left:813px;top:163px;font-size:11.50px;color:#aaa;transform:scaleX(0.8696);transform-origin:0 50%">?</div>
<svg style="left:829px;top:168px" width="10" height="3" ><circle cx="1.2" cy="1.5" r="1.1" fill="#777"/><circle cx="4.7" cy="1.5" r="1.1" fill="#777"/><circle cx="8.2" cy="1.5" r="1.1" fill="#777"/></svg>
<svg style="left:478px;top:183px" width="22" height="22" ><circle cx="10.5" cy="10.5" r="9.8" fill="none" stroke="#9a9a9a"/><circle cx="12" cy="9" r="4" fill="none" stroke="#9a9a9a"/><path d="M9.2 11.8L5.5 15.5" stroke="#9a9a9a"/></svg>
<div class="t " style="left:472px;top:207px;color:#b5b1b5;letter-spacing:-0.172px;font-size:9.20px;transform:scaleX(0.8696);transform-origin:0 50%">Pesquisar</div>
<svg style="left:510px;top:184px" width="10" height="10" ><circle cx="5" cy="4.5" r="4.3" fill="none" stroke="#aaa"/><path d="M5 2V7M3 5L5 7L7 5" stroke="#aaa" fill="none"/></svg>
<svg style="left:510px;top:199px" width="11" height="10" ><rect x="0.5" y="0.5" width="10" height="8" fill="none" stroke="#999"/><path d="M0.5 2.5H10.5" stroke="#999"/><circle cx="5" cy="5.5" r="2" fill="none" stroke="#999"/><path d="M3.5 7L1 9.5" stroke="#999"/></svg>
<svg style="left:510px;top:214px" width="10" height="10" ><circle cx="5" cy="5" r="4.3" fill="none" stroke="#aaa"/><path d="M5 8V3M3 5L5 3L7 5" stroke="#aaa" fill="none"/></svg>
<div class="a" style="left:525px;top:181px;width:1px;height:47px;background:#e8e5e8;"></div>
<svg style="left:536px;top:183px" width="22" height="22" ><circle cx="10.5" cy="10.5" r="9.8" fill="none" stroke="#8a8a8a"/><path d="M10.5 3.5V17.5M3.5 10.5H17.5" stroke="#8a8a8a"/></svg>
<div class="t " style="left:529px;top:207px;color:#b5b1b5;letter-spacing:-0.172px;font-size:9.20px;transform:scaleX(0.8696);transform-origin:0 50%">Adicionar</div>
<svg style="left:544px;top:224px" width="5" height="3" ><path d="M0 0H5L2.5 3Z" fill="#c0c0c0"/></svg>
<svg style="left:569px;top:183px" width="22" height="22" ><circle cx="10.5" cy="10.5" r="9.8" fill="none" stroke="#9a9a9a"/><path d="M6 15L7 12L13.5 5.5L15.5 7.5L9 14Z M12.5 6.5L14.5 8.5" stroke="#9a9a9a" fill="none"/></svg>
<div class="t " style="left:568px;top:207px;color:#b5b1b5;letter-spacing:-0.172px;font-size:9.20px;transform:scaleX(0.8696);transform-origin:0 50%">Alterar</div>
<div class="a" style="left:594px;top:180px;width:29px;height:47px;background:#9cc4e8;"></div>
<svg style="left:598px;top:183px" width="22" height="22" ><circle cx="10.5" cy="10.5" r="9.8" fill="#fff" stroke="#2aa853" stroke-width="1.3"/><path d="M5.5 10.5L9 14L15.5 7" stroke="#2aa853" fill="none" stroke-width="1.3"/></svg>
<div class="t " style="left:597px;top:207px;color:#333;letter-spacing:-0.172px;font-size:9.20px;transform:scaleX(0.8696);transform-origin:0 50%">Gravar</div>
<svg style="left:630px;top:183px" width="22" height="22" ><circle cx="10.5" cy="10.5" r="9.8" fill="none" stroke="#555"/><path d="M6.2 8A5 5 0 1 1 5.6 11.4" stroke="#e0282c" fill="none" stroke-width="1.1"/><path d="M5.7 4.8V8.4H9.2" stroke="#e0282c" fill="none" stroke-width="1.1"/></svg>
<div class="t " style="left:624px;top:207px;color:#333;letter-spacing:-0.172px;font-size:9.20px;transform:scaleX(0.8696);transform-origin:0 50%">Cancelar</div>
<div class="a" style="left:659px;top:181px;width:1px;height:47px;background:#e8e5e8;"></div>
<svg style="left:664px;top:182px" width="12" height="12" ><circle cx="5.5" cy="5.5" r="5" fill="none" stroke="#999"/><path d="M3 5.5H8" stroke="#999"/></svg>
<div class="t " style="left:676px;top:182px;color:#b5b1b5;letter-spacing:-0.172px;font-size:9.20px;transform:scaleX(0.8696);transform-origin:0 50%">Excluir</div>
<svg style="left:706px;top:187px" width="5" height="3" ><path d="M0 0H5L2.5 3Z" fill="#c0c0c0"/></svg>
<svg style="left:664px;top:197px" width="12" height="12" ><path d="M1.5 6A4.5 4.5 0 0 1 9.5 3M10.5 6A4.5 4.5 0 0 1 2.5 9" fill="none" stroke="#999"/><path d="M9.5 0.5V3.5H6.5M2.5 11.5V8.5H5.5" fill="none" stroke="#999"/></svg>
<div class="t " style="left:676px;top:196px;color:#b5b1b5;letter-spacing:-0.172px;font-size:9.20px;transform:scaleX(0.8696);transform-origin:0 50%">Atualizar</div>
<svg style="left:664px;top:211px" width="12" height="12" ><rect x="0.5" y="0.5" width="11" height="11" fill="none" stroke="#555"/><path d="M0.5 1.5H11.5" stroke="#3a7bd5" stroke-width="2"/><path d="M3.5 3V11.5" stroke="#555"/><path d="M5 5.5H10M5 7.5H10M5 9.5H10" stroke="#777"/></svg>
<div class="t " style="left:676px;top:210px;color:#333;letter-spacing:-0.172px;font-size:9.20px;transform:scaleX(0.8696);transform-origin:0 50%">Aplicações</div>
<svg style="left:717px;top:215px" width="5" height="3" ><path d="M0 0H5L2.5 3Z" fill="#777"/></svg>
<div class="t " style="left:579px;top:228px;color:#666;letter-spacing:-0.172px;font-size:9.20px;transform:scaleX(0.8696);transform-origin:0 50%">Navegação</div>
<div class="a" style="left:728px;top:182px;width:1px;height:55px;background:#e8e5e8;"></div>
<svg style="left:735px;top:183px" width="12" height="11" ><path d="M0.5 0.5H11.5V7.5H4L1.5 10V7.5H0.5Z" fill="none" stroke="#333"/><path d="M2.5 3H9.5M2.5 5H9.5" stroke="#3a83d8"/></svg>
<svg style="left:735px;top:199px" width="12" height="12" ><rect x="0.5" y="0.5" width="11" height="11" fill="none" stroke="#333"/><path d="M0.5 2.5H11.5" stroke="#c07ad0" stroke-width="2"/><path d="M3 6H9M3 9H9" stroke="#777"/></svg>
<div class="a" style="left:751px;top:182px;width:1px;height:45px;background:#e8e5e8;"></div>
<svg style="left:755px;top:183px" width="12" height="12" ><path d="M0.5 0.5H6.5V9.5H0.5Z" fill="#fff" stroke="#999"/><path d="M3.5 3.5H8.5L11.5 6.5V11.5H3.5Z" fill="#fff" stroke="#999"/></svg>
<svg style="left:755px;top:199px" width="12" height="12" ><path d="M0.5 2.5H8.5V10.5H0.5Z" fill="none" stroke="#999"/><path d="M3 1H6V3H3Z" fill="#fff" stroke="#999"/><path d="M4.5 5.5H9.5L11.5 7.5V11.5H4.5Z" fill="#fff" stroke="#999"/></svg>
<svg style="left:755px;top:214px" width="12" height="12" ><path d="M2.5 4.5V0.5H9.5V4.5M0.5 4.5H11.5V9.5H0.5Z M2.5 7.5H9.5V11.5H2.5Z" fill="#fff" stroke="#888"/></svg>
<div class="a" style="left:776px;top:182px;width:1px;height:55px;background:#e8e5e8;"></div>
<div class="t " style="left:732px;top:228px;color:#666;letter-spacing:-0.172px;font-size:9.20px;transform:scaleX(0.8696);transform-origin:0 50%">Ferramentas</div>
<div class="a" style="left:465px;top:242px;width:381px;height:1px;background:#e2e0e2;"></div>
<div class="a" style="left:464px;top:121px;width:1px;height:371px;background:#858385;"></div>
<div class="a" style="left:846px;top:121px;width:1px;height:371px;background:#9a989a;"></div>
<div class="a" style="left:25px;top:510px;width:400px;height:19px;background:#0070c6;"></div>
<div class="a" style="left:315px;top:515px;width:102px;height:10px;background:#e6e6e6;"></div>
<div class="t " style="left:419px;top:514px;color:#9cc5ee;font-size:10.35px;transform:scaleX(0.8696);transform-origin:0 50%">C</div>
<div class="a" style="left:768px;top:473px;width:78px;height:18px;background:#0070c6;"></div>
<div class="a" style="left:768px;top:478px;width:31px;height:10px;background:#e6e6e6;"></div>
<div class="t " style="left:802px;top:477px;color:#8dbbe6;font-size:10.35px;letter-spacing:-0.230px;transform:scaleX(0.8696);transform-origin:0 50%">CAP</div>
<div class="t " style="left:823px;top:477px;color:#fff;font-size:9px;font-weight:bold;letter-spacing:-0.3px">NUM</div>
<div class="a" style="left:25px;top:572px;width:824px;height:1px;background:#1f78c8;"></div>
<div class="a" style="left:26px;top:573px;width:30px;height:12px;border-left:1px solid #ccc;border-right:1px solid #ccc;background:#fff"></div>
<div class="a" style="left:26px;top:584px;width:30px;height:1.5px;background:#1f78c8;"></div>
<div class="t noscale" style="left:32px;top:573px;font-size:8.8px;color:#3a7ad0;letter-spacing:-0.1px">Itens</div>
<div class="t noscale" style="left:61px;top:573px;font-size:8.8px;color:#8a8a8a;letter-spacing:-0.3px">Contas a Pagar</div>
<div class="a" style="left:124px;top:575px;width:1px;height:10px;background:#999;"></div>
<div class="t" style="left:436px;top:247px;width:120px;text-align:right;font-weight:bold;font-size:8.2px;letter-spacing:-0.4px;color:#383838;">Ordem</div>
<div class="a" style="left:559px;top:245px;width:76px;height:13px;background:#fff;border-top:1px solid #777;border-left:1px solid #777;border-right:1px solid #f4eef0;border-bottom:1px solid #f4eef0"></div>
<div class="t " style="left:561px;top:246px;color:#222;font-size:9.54px;letter-spacing:-0.115px;line-height:13px;transform:scaleX(0.8696);transform-origin:0 50%">00005</div>
<div class="t" style="left:633px;top:247px;width:120px;text-align:right;font-weight:bold;font-size:8.2px;letter-spacing:-0.4px;color:#383838;">Data</div>
<div class="a" style="left:755px;top:246px;width:53px;height:12px;background:#fdf5f5;border-top:1px solid #777;border-left:1px solid #777;border-right:1px solid #f4eef0;border-bottom:1px solid #f4eef0"></div>
<div class="t " style="left:757px;top:247px;color:#222;font-size:9.54px;letter-spacing:-0.115px;line-height:12px;transform:scaleX(0.8696);transform-origin:0 50%">27/01/2026</div>
<svg style="left:811px;top:248px" width="10" height="10" ><rect x="0.5" y="0.5" width="9" height="9" fill="#fff" stroke="#aaa"/><path d="M0.5 2.5H9.5" stroke="#bbb" stroke-width="2"/><path d="M3.5 3V9.5M6.5 3V9.5M0.5 5.5H9.5M0.5 7.5H9.5" stroke="#ccc"/><rect x="6.5" y="5.5" width="3" height="2" fill="#f0a050"/></svg>
<div class="t" style="left:436px;top:262px;width:120px;text-align:right;font-weight:bold;font-size:8.2px;letter-spacing:-0.4px;color:#383838;">Despesa</div>
<div class="a" style="left:559px;top:261px;width:76px;height:12px;background:#fcf1f1;border-top:1px solid #777;border-left:1px solid #777;border-right:1px solid #f4eef0;border-bottom:1px solid #f4eef0"></div>
<div class="t " style="left:561px;top:262px;color:#222;font-size:9.54px;letter-spacing:-0.115px;line-height:12px;transform:scaleX(0.8696);transform-origin:0 50%">0007</div>
<div class="a" style="left:635px;top:261px;width:183px;height:13px;background:#fdf5f8;border-top:1px solid #dcdcdc;border-left:1px solid #dcdcdc;border-right:1px solid #e4e4e4;border-bottom:1px solid #e4e4e4"></div>
<div class="t " style="left:637px;top:260px;color:#b0a8ac;font-size:9.54px;letter-spacing:-0.115px;line-height:13px;transform:scaleX(0.8696);transform-origin:0 50%">7. Viagem</div>
<svg style="left:809px;top:264px" width="8" height="8" ><circle cx="3.2" cy="3.2" r="2.6" fill="none" stroke="#ccc"/><path d="M5 5L7.5 7.5" stroke="#ccc" stroke-width="1.2"/></svg>
<div class="t" style="left:436px;top:277px;width:120px;text-align:right;font-weight:bold;font-size:8.2px;letter-spacing:-0.4px;color:#383838;">Quantidade</div>
<div class="a" style="left:559px;top:275px;width:64px;height:13px;background:#fbf0f0;border-top:1px solid #dcdcdc;border-left:1px solid #dcdcdc;border-right:1px solid #e4e4e4;border-bottom:1px solid #e4e4e4"></div>
<div class="t" style="left:549.70px;top:275px;width:71.30px;text-align:right;color:#333;font-size:9.54px;letter-spacing:-0.115px;line-height:13px;transform:scaleX(0.8696);transform-origin:100% 50%">2,00000</div>
<div class="a" style="left:623px;top:276px;width:11px;height:12px;border:1px solid #c8c8c8;background:#fafafa"></div>
<div class="a" style="left:624px;top:282px;width:9px;height:1px;background:#d0d0d0;"></div>
<svg style="left:627px;top:279px" width="3" height="2" ><path d="M0 2H3L1.5 0Z" fill="#555"/></svg>
<svg style="left:627px;top:283px" width="3" height="2" ><path d="M0 0H3L1.5 2Z" fill="#555"/></svg>
<svg style="left:638px;top:277px" width="11" height="12" ><path d="M1 11L10 1" stroke="#e0a040" stroke-width="2.2"/><path d="M1 11L2.5 9.5" stroke="#c08020" stroke-width="2.2"/></svg>
<div class="a" style="left:650px;top:275px;width:34px;height:14px;background:#fff;border-top:1px solid #777;border-left:1px solid #777;border-right:1px solid #f4eef0;border-bottom:1px solid #f4eef0"></div>
<div class="t " style="left:652px;top:274px;color:#222;font-size:9.54px;letter-spacing:-0.115px;line-height:14px;transform:scaleX(0.8696);transform-origin:0 50%">UN_1</div>
<div class="t" style="left:594px;top:277px;width:120px;text-align:right;font-weight:bold;font-size:8.2px;letter-spacing:-0.4px;color:#383838;">Status</div>
<div class="a" style="left:715px;top:277px;width:103px;height:12px;background:#fff;border:1px solid #e4e4e4"></div>
<div class="t" style="left:718.00px;top:277px;width:101.20px;overflow:hidden;color:#a8a8a8;font-size:9.54px;line-height:12px;letter-spacing:-0.115px;transform:scaleX(0.8696);transform-origin:0 50%">1-Aguardando Liberação</div>
<div class="a" style="left:806px;top:278px;width:11px;height:10px;background:#f8f8f8;border:1px solid #ccc"></div>
<svg style="left:809px;top:282px" width="6" height="3" ><path d="M0 0H6L3 3Z" fill="#888"/></svg>
<div class="t" style="left:436px;top:292px;width:120px;text-align:right;font-weight:bold;font-size:8.2px;letter-spacing:-0.4px;color:#383838;">Valor Unitário</div>
<div class="a" style="left:559px;top:290px;width:64px;height:13px;background:#fbf0f0;border-top:1px solid #dcdcdc;border-left:1px solid #dcdcdc;border-right:1px solid #e4e4e4;border-bottom:1px solid #e4e4e4"></div>
<div class="t" style="left:549.70px;top:290px;width:71.30px;text-align:right;color:#333;font-size:9.54px;letter-spacing:-0.115px;line-height:13px;transform:scaleX(0.8696);transform-origin:100% 50%">200,00</div>
<div class="a" style="left:623px;top:291px;width:11px;height:12px;border:1px solid #c8c8c8;background:#fafafa"></div>
<div class="a" style="left:624px;top:297px;width:9px;height:1px;background:#d0d0d0;"></div>
<svg style="left:627px;top:294px" width="3" height="2" ><path d="M0 2H3L1.5 0Z" fill="#555"/></svg>
<svg style="left:627px;top:298px" width="3" height="2" ><path d="M0 0H3L1.5 2Z" fill="#555"/></svg>
<svg style="left:638px;top:292px" width="10" height="10" ><circle cx="5" cy="5" r="4.6" fill="#f0b400" stroke="#c88a00" stroke-width="0.8"/><text x="5" y="7.8" font-size="7" font-weight="bold" fill="#fff" text-anchor="middle" font-family="Liberation Sans">$</text></svg>
<div class="a" style="left:650px;top:290px;width:34px;height:14px;background:#fff;border-top:1px solid #777;border-left:1px solid #777;border-right:1px solid #f4eef0;border-bottom:1px solid #f4eef0"></div>
<div class="t " style="left:652px;top:289px;color:#222;font-size:9.54px;letter-spacing:-0.115px;line-height:14px;transform:scaleX(0.8696);transform-origin:0 50%">REAL</div>
<div class="a" style="left:716px;top:290px;width:103px;height:14px;background:#f3f1f3;border-top:1px solid #fff;border-left:1px solid #fff;border-right:2px solid #777;border-bottom:2px solid #777"></div>
<svg style="left:719px;top:292px" width="9" height="10" ><path d="M1.5 1.5H7.5V9.5H1.5Z" fill="#b02020"/><path d="M1.5 1.5L2.5 0.5H8.5V8.5L7.5 9.5" fill="#d05050"/><path d="M2.5 3V8" stroke="#e8a0a0"/></svg>
<div class="t" style="left:723.55px;top:291px;width:98.90px;text-align:center;color:#222;font-size:9.54px;letter-spacing:-0.115px;transform:scaleX(0.8696);transform-origin:50% 50%">Rateio Contábil</div>
<div class="a" style="left:716px;top:304px;width:103px;height:15px;background:#f3f1f3;border-top:1px solid #fff;border-left:1px solid #fff;border-right:2px solid #777;border-bottom:2px solid #777"></div>
<svg style="left:719px;top:306px" width="9" height="10" ><path d="M1.5 1.5H7.5V9.5H1.5Z" fill="#2a9a2a"/><path d="M1.5 1.5L2.5 0.5H8.5V8.5L7.5 9.5" fill="#60c060"/><path d="M2.5 3V8" stroke="#a0e0a0"/></svg>
<div class="t" style="left:723.55px;top:306px;width:98.90px;text-align:center;color:#222;font-size:9.54px;letter-spacing:-0.115px;transform:scaleX(0.8696);transform-origin:50% 50%">Rateio Financeiro</div>
<div class="t" style="left:436px;top:307px;width:120px;text-align:right;font-weight:bold;font-size:8.2px;letter-spacing:-0.4px;color:#383838;">Valor Total</div>
<div class="a" style="left:559px;top:305px;width:64px;height:13px;background:#f7f3f5;border-top:1px solid #dcdcdc;border-left:1px solid #dcdcdc;border-right:1px solid #e4e4e4;border-bottom:1px solid #e4e4e4"></div>
<div class="t" style="left:549.70px;top:305px;width:71.30px;text-align:right;color:#999;font-size:9.54px;letter-spacing:-0.115px;line-height:13px;transform:scaleX(0.8696);transform-origin:100% 50%">400,00</div>
<div class="a" style="left:623px;top:306px;width:11px;height:12px;border:1px solid #c8c8c8;background:#fafafa"></div>
<div class="a" style="left:624px;top:312px;width:9px;height:1px;background:#d0d0d0;"></div>
<svg style="left:627px;top:309px" width="3" height="2" ><path d="M0 2H3L1.5 0Z" fill="#bbb"/></svg>
<svg style="left:627px;top:313px" width="3" height="2" ><path d="M0 0H3L1.5 2Z" fill="#bbb"/></svg>
<div class="t" style="left:436px;top:323px;width:120px;text-align:right;font-weight:bold;font-size:8.2px;letter-spacing:-0.4px;color:#383838;">Observação</div>
<div class="a" style="left:559px;top:321px;width:259px;height:44px;background:#fff;border-top:1px solid #dcdcdc;border-left:1px solid #dcdcdc;border-right:1px solid #e4e4e4;border-bottom:1px solid #e4e4e4"></div>
<div class="a" style="left:806px;top:322px;width:12px;height:11px;border:1px solid #c8c8c8;background:#f7f7f7"></div>
<svg style="left:809px;top:326px" width="6" height="3" ><path d="M0 3H6L3 0Z" fill="#999"/></svg>
<div class="a" style="left:806px;top:353px;width:12px;height:11px;border:1px solid #c8c8c8;background:#f7f7f7"></div>
<svg style="left:809px;top:357px" width="6" height="3" ><path d="M0 0H6L3 3Z" fill="#999"/></svg>
<div class="t" style="left:436px;top:369px;width:120px;text-align:right;font-weight:bold;font-size:8.2px;letter-spacing:-0.4px;color:#383838;">Documentos</div>
<div class="a" style="left:559px;top:367px;width:259px;height:44px;background:#fff;border-top:1px solid #dcdcdc;border-left:1px solid #dcdcdc;border-right:1px solid #e4e4e4;border-bottom:1px solid #e4e4e4"></div>
<div class="a" style="left:806px;top:368px;width:12px;height:11px;border:1px solid #c8c8c8;background:#f7f7f7"></div>
<svg style="left:809px;top:372px" width="6" height="3" ><path d="M0 3H6L3 0Z" fill="#999"/></svg>
<div class="a" style="left:806px;top:399px;width:12px;height:11px;border:1px solid #c8c8c8;background:#f7f7f7"></div>
<svg style="left:809px;top:403px" width="6" height="3" ><path d="M0 0H6L3 3Z" fill="#999"/></svg>
<div class="t" style="left:436px;top:416px;width:120px;text-align:right;font-weight:bold;font-size:8.2px;letter-spacing:-0.4px;color:#383838;">Motivo da Rejeição</div>
<div class="a" style="left:559px;top:413px;width:259px;height:45px;background:#fcf8fb;border-top:1px solid #dcdcdc;border-left:1px solid #dcdcdc;border-right:1px solid #e4e4e4;border-bottom:1px solid #e4e4e4"></div>
<div class="a" style="left:806px;top:414px;width:12px;height:11px;border:1px solid #c8c8c8;background:#f7f7f7"></div>
<svg style="left:809px;top:418px" width="6" height="3" ><path d="M0 3H6L3 0Z" fill="#999"/></svg>
<div class="a" style="left:806px;top:446px;width:12px;height:11px;border:1px solid #c8c8c8;background:#f7f7f7"></div>
<svg style="left:809px;top:450px" width="6" height="3" ><path d="M0 0H6L3 3Z" fill="#999"/></svg>
<div class="a" style="left:807px;top:426px;width:11px;height:20px;background:#f5f3f5;"></div>
<div class="a" style="left:425px;top:429px;width:343px;height:124px;border:3px solid #e0101a;background:#fff"></div>
<div class="a" style="left:428px;top:432px;width:337px;height:14px;background:#f2f0f2;"></div>
<div class="t " style="left:428px;top:433px;font-size:9.54px;color:#222;letter-spacing:-0.115px;transform:scaleX(0.8696);transform-origin:0 50%">Gabrielle Manuellita de Oliveira (02392)</div>
<svg style="left:752px;top:435px" width="8" height="8" ><path d="M0.5 0.5L7.5 7.5M7.5 0.5L0.5 7.5" stroke="#333" stroke-width="1.1"/></svg>
<svg style="left:433px;top:455px" width="21" height="19" ><path d="M10.5 1L20 18H1Z" fill="none" stroke="#e8904a" stroke-width="1.1" stroke-linejoin="round"/><path d="M10.5 6.5V13" stroke="#555" stroke-width="1.3"/><circle cx="10.5" cy="15.3" r="0.8" fill="#555"/></svg>
<div class="t " style="left:461px;top:457px;font-size:15.29px;line-height:15px;color:#2f6fd8;letter-spacing:-0.115px;transform:scaleX(0.8696);transform-origin:0 50%">Atenção</div>
<div class="t " style="left:461px;top:480px;font-size:13.11px;line-height:15px;color:#333;transform:scaleX(0.8696);transform-origin:0 50%">O solicitante não se encaixa em nenhum perfil de</div>
<div class="t " style="left:461px;top:495px;font-size:13.11px;line-height:15px;color:#333;transform:scaleX(0.8696);transform-origin:0 50%">avaliação</div>
<div class="a" style="left:428px;top:523px;width:337px;height:27px;background:#f4f2f5;"></div>
<div class="a" style="left:428px;top:523px;width:337px;height:1px;background:#e6e4e6;"></div>
<div class="a" style="left:707px;top:529px;width:51px;height:15px;border:1px solid #4a90d9;border-radius:2px;background:#fff"></div>
<div class="a" style="left:709px;top:531px;width:47px;height:11px;border:1px dotted #333"></div>
<div class="t" style="left:703.17px;top:531px;width:58.65px;text-align:center;font-size:9.77px;color:#222;transform:scaleX(0.8696);transform-origin:50% 50%">OK</div>
</body></html>
